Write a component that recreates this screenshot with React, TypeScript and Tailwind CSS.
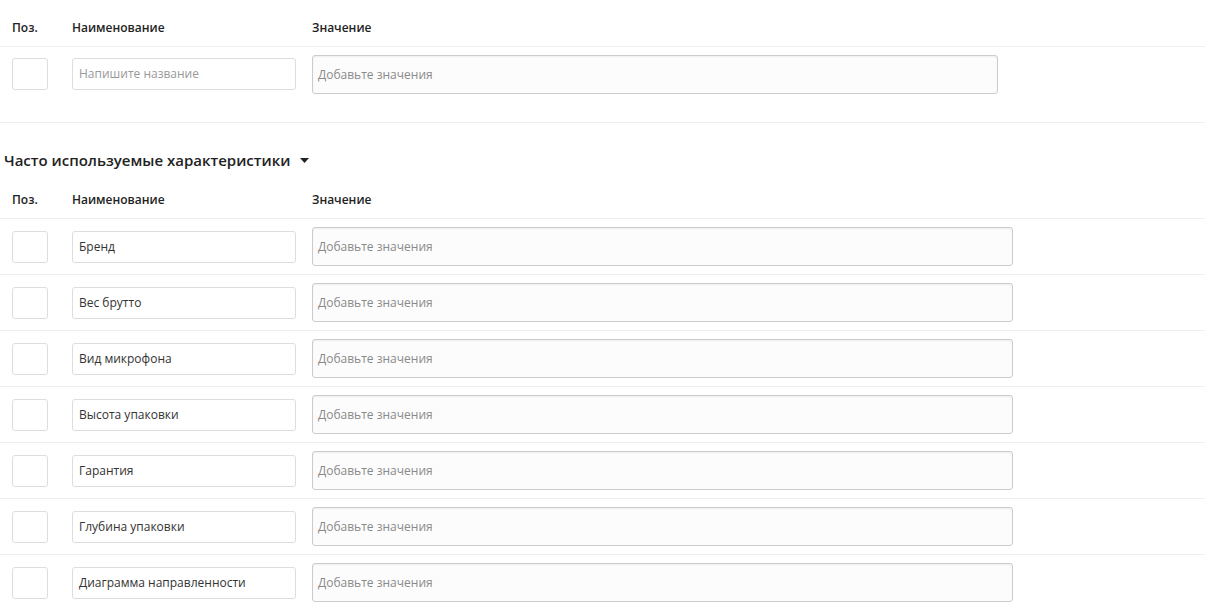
const FONT = "font-['Open_Sans',sans-serif]";

const rows = [
  "Бренд",
  "Вес брутто",
  "Вид микрофона",
  "Высота упаковки",
  "Гарантия",
  "Глубина упаковки",
  "Диаграмма направленности",
];

function HeaderRow() {
  return (
    <div className="flex h-[47px] items-center border-b border-[#eeeeee] pt-[10px] text-[12px] font-semibold text-[#222]">
      <div className="w-[72px] pl-3">Поз.</div>
      <div className="w-[240px]">Наименование</div>
      <div>Значение</div>
    </div>
  );
}

function Row({ name, placeholder, valueWidth, top = false }: { name?: string; placeholder?: string; valueWidth: string; top?: boolean }) {
  return (
    <div className={`flex items-center ${top ? "h-[54px]" : "h-[56px] border-b border-[#eeeeee]"}`}>
      <div className="w-[72px] pl-3">
        <div className="h-[32px] w-[36px] rounded-[3px] border border-[#dddddd] bg-white" />
      </div>
      <div className="w-[240px]">
        <div className="flex h-[32px] w-[224px] items-center rounded-[3px] border border-[#dddddd] bg-white px-[6px] text-[12px]">
          {name ? <span className="text-[#333]">{name}</span> : <span className="text-[#999]">{placeholder}</span>}
        </div>
      </div>
      <div className={`flex h-[39px] ${valueWidth} items-center rounded-[3px] border border-[#cccccc] bg-[#fcfcfc] px-[5px] pt-[1px] text-[12px] text-[#8a8a8a] shadow-[inset_0_1px_2px_rgba(0,0,0,0.06)]`}>
        Добавьте значения
      </div>
    </div>
  );
}

export default function App() {
  return (
    <div className={`${FONT} h-[606px] w-[1210px] overflow-hidden bg-white`}>
      <div className="w-[1205px]">
        <HeaderRow />
        <div className="h-[76px] border-b border-[#eeeeee]">
          <Row placeholder="Напишите название" valueWidth="w-[686px]" top />
        </div>
        <div className="flex h-[49px] items-end pb-[1px] pl-1">
          <span className="text-[15px] font-semibold text-[#222]">Часто используемые характеристики</span>
          <svg className="mb-[8px] ml-[10px]" width="9" height="5" viewBox="0 0 9 5">
            <path d="M0 0h9L4.5 5z" fill="#222" />
          </svg>
        </div>
        <HeaderRow />
        {rows.map((r) => (
          <Row key={r} name={r} valueWidth="w-[701px]" />
        ))}
      </div>
    </div>
  );
}
